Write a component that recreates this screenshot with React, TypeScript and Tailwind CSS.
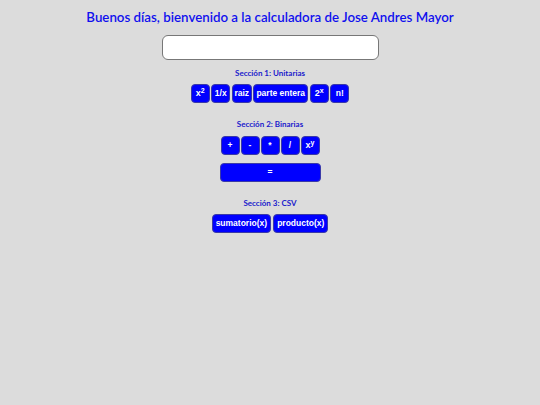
import React from "react";

const btn =
  "h-[19px] rounded-[4px] border border-[#3a3aa8] bg-[#0000ff] px-[2px] text-[8.5px] font-bold leading-none text-white flex items-center justify-center";

const Sup = ({ base, exp }: { base: string; exp: string }) => (
  <span className="text-[9px]">
    {base}
    <sup className="text-[7px] relative top-[-3px] align-baseline">{exp}</sup>
  </span>
);

export default function App() {
  const arial = { fontFamily: '"Liberation Sans", Arial, sans-serif' };
  return (
    <div
      className="min-h-[405px] w-full bg-[#dcdcdc] flex flex-col items-center"
      style={{ fontFamily: "Lato, sans-serif" }}
    >
      <h1 className="mt-[8px] text-[13.3px] font-semibold text-[#1010ee] leading-[18px]">
        Buenos días, bienvenido a la calculadora de Jose Andres Mayor
      </h1>
      <input
        className="mt-[9px] h-[25px] w-[217px] rounded-[6px] border border-[#777] bg-white outline-none"
        type="text"
      />

      <div className="mt-[7px] text-[8px] font-bold text-[#1a1acc]">Sección 1: Unitarias</div>
      <div className="mt-[5px] flex gap-[1.5px]" style={arial}>
        <button className={`${btn} w-[19px]`}>
          <Sup base="x" exp="2" />
        </button>
        <button className={`${btn} w-[19px]`}>1/x</button>
        <button className={`${btn} w-[20px]`}>raiz</button>
        <button className={`${btn} w-[55px]`}>parte entera</button>
        <button className={`${btn} w-[19px]`}>
          <Sup base="2" exp="x" />
        </button>
        <button className={`${btn} w-[19px]`}>n!</button>
      </div>

      <div className="mt-[15px] text-[8px] font-bold text-[#1a1acc]">Sección 2: Binarias</div>
      <div className="mt-[6px] flex gap-[1px]" style={arial}>
        <button className={`${btn} w-[19px]`}>+</button>
        <button className={`${btn} w-[19px]`}>-</button>
        <button className={`${btn} w-[19px]`}>*</button>
        <button className={`${btn} w-[19px]`}>/</button>
        <button className={`${btn} w-[19px]`}>
          <Sup base="x" exp="y" />
        </button>
      </div>
      <button className={`${btn} mt-[8px] w-[101px]`} style={arial}>
        =
      </button>

      <div className="mt-[15px] text-[8px] font-bold text-[#1a1acc]">Sección 3: CSV</div>
      <div className="mt-[5px] flex gap-[2px]" style={arial}>
        <button className={`${btn} px-[3px]`}>sumatorio(x)</button>
        <button className={`${btn} px-[3px]`}>producto(x)</button>
      </div>
    </div>
  );
}
